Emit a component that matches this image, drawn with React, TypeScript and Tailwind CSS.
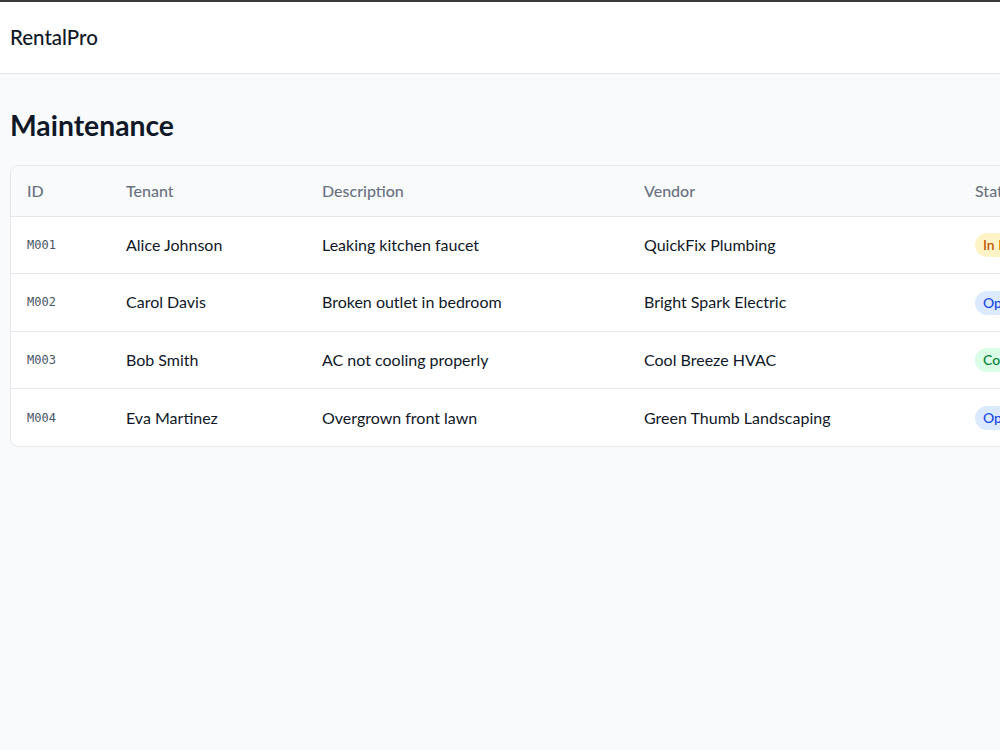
import React from "react";

const rows = [
  { id: "M001", tenant: "Alice Johnson", desc: "Leaking kitchen faucet", vendor: "QuickFix Plumbing", status: "In Progress" },
  { id: "M002", tenant: "Carol Davis", desc: "Broken outlet in bedroom", vendor: "Bright Spark Electric", status: "Open" },
  { id: "M003", tenant: "Bob Smith", desc: "AC not cooling properly", vendor: "Cool Breeze HVAC", status: "Completed" },
  { id: "M004", tenant: "Eva Martinez", desc: "Overgrown front lawn", vendor: "Green Thumb Landscaping", status: "Open" },
];

function Badge({ status }: { status: string }) {
  const cls =
    status === "In Progress"
      ? "bg-amber-100 text-amber-700"
      : status === "Completed"
      ? "bg-green-100 text-green-700"
      : "bg-blue-100 text-blue-700";
  return <span className={`inline-block rounded-full px-2 py-0.5 text-sm font-medium ${cls}`}>{status}</span>;
}

export default function App() {
  return (
    <div className="min-h-[750px] w-[1000px] overflow-hidden bg-gray-50 text-gray-900" style={{ fontFamily: "Lato, 'Noto Sans', sans-serif" }}>
      <div className="h-[2px] bg-[#3a3a3a]" />
      <header className="flex h-[72px] items-center border-b border-gray-200 bg-white px-2.5">
        <span className="text-[20.5px] font-medium">RentalPro</span>
      </header>
      <main className="px-2.5 pt-[33px]">
        <h1 className="text-[28.3px] font-bold leading-9">Maintenance</h1>
        <div className="mt-[22px] w-[1200px] overflow-hidden rounded-lg border border-gray-200 bg-white">
          <table className="w-full border-collapse text-left whitespace-nowrap">
            <thead className="bg-gray-50">
              <tr className="h-[50px] border-b border-gray-200 text-base font-medium text-gray-500">
                <th className="w-[99px] px-4 font-medium">ID</th>
                <th className="w-[196px] px-4 font-medium">Tenant</th>
                <th className="w-[322px] px-4 font-medium">Description</th>
                <th className="w-[331px] px-4 font-medium">Vendor</th>
                <th className="px-4 font-medium">Status</th>
              </tr>
            </thead>
            <tbody>
              {rows.map((r, i) => (
                <tr key={r.id} className={`h-[57.5px] ${i < rows.length - 1 ? "border-b border-gray-200" : ""}`}>
                  <td className="px-4 font-['DejaVu_Sans_Mono',monospace] text-xs text-gray-600">{r.id}</td>
                  <td className="px-4 text-base">{r.tenant}</td>
                  <td className="px-4 text-base">{r.desc}</td>
                  <td className="px-4 text-base">{r.vendor}</td>
                  <td className="px-4">
                    <Badge status={r.status} />
                  </td>
                </tr>
              ))}
            </tbody>
          </table>
        </div>
      </main>
    </div>
  );
}
